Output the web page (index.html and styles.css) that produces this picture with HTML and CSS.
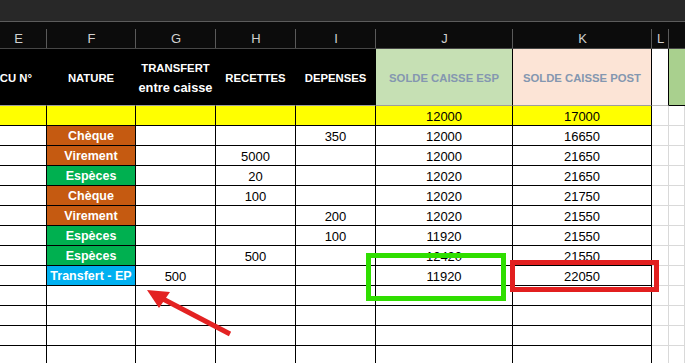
FILE: index.html
```html
<!DOCTYPE html>
<html lang="fr">
<head>
<meta charset="utf-8">
<title>Caisse</title>
<link rel="stylesheet" href="styles.css">
</head>
<body>
<div class="topbar"></div>
<div class="sheet">
  <div class="colhdr col-e">E</div>
  <div class="colhdr">F</div>
  <div class="colhdr">G</div>
  <div class="colhdr">H</div>
  <div class="colhdr">I</div>
  <div class="colhdr">J</div>
  <div class="colhdr">K</div>
  <div class="colhdr">L</div>
  <div class="colhdr colhdr-last"></div>

  <div class="hdr hdr-e"><span>RECU N°</span></div>
  <div class="hdr">NATURE</div>
  <div class="hdr hdr-two"><span>TRANSFERT</span><span class="sub">entre caisse</span></div>
  <div class="hdr">RECETTES</div>
  <div class="hdr">DEPENSES</div>
  <div class="hdr hdr-esp">SOLDE CAISSE ESP</div>
  <div class="hdr hdr-post">SOLDE CAISSE POST</div>
  <div class="hdr hdr-l"></div>
  <div class="hdr hdr-m"></div>

  <div class="c yellow"></div><div class="c yellow"></div><div class="c yellow"></div><div class="c yellow"></div><div class="c yellow"></div><div class="c yellow">12000</div><div class="c yellow">17000</div><div class="g"></div><div class="g"></div>

  <div class="c"></div><div class="c nat cheque">Chèque</div><div class="c"></div><div class="c"></div><div class="c">350</div><div class="c">12000</div><div class="c">16650</div><div class="g"></div><div class="g"></div>
  <div class="c"></div><div class="c nat cheque">Virement</div><div class="c"></div><div class="c">5000</div><div class="c"></div><div class="c">12000</div><div class="c">21650</div><div class="g"></div><div class="g"></div>
  <div class="c"></div><div class="c nat esp">Espèces</div><div class="c"></div><div class="c">20</div><div class="c"></div><div class="c">12020</div><div class="c">21650</div><div class="g"></div><div class="g"></div>
  <div class="c"></div><div class="c nat cheque">Chèque</div><div class="c"></div><div class="c">100</div><div class="c"></div><div class="c">12020</div><div class="c">21750</div><div class="g"></div><div class="g"></div>
  <div class="c"></div><div class="c nat cheque">Virement</div><div class="c"></div><div class="c"></div><div class="c">200</div><div class="c">12020</div><div class="c">21550</div><div class="g"></div><div class="g"></div>
  <div class="c"></div><div class="c nat esp">Espèces</div><div class="c"></div><div class="c"></div><div class="c">100</div><div class="c">11920</div><div class="c">21550</div><div class="g"></div><div class="g"></div>
  <div class="c"></div><div class="c nat esp">Espèces</div><div class="c"></div><div class="c">500</div><div class="c"></div><div class="c">12420</div><div class="c">21550</div><div class="g"></div><div class="g"></div>
  <div class="c"></div><div class="c nat transf">Transfert - EP</div><div class="c">500</div><div class="c"></div><div class="c"></div><div class="c">11920</div><div class="c">22050</div><div class="g"></div><div class="g"></div>
  <div class="c"></div><div class="c"></div><div class="c"></div><div class="c"></div><div class="c"></div><div class="c"></div><div class="c"></div><div class="g"></div><div class="g"></div>
  <div class="c"></div><div class="c"></div><div class="c"></div><div class="c"></div><div class="c"></div><div class="c"></div><div class="c"></div><div class="g"></div><div class="g"></div>
  <div class="c"></div><div class="c"></div><div class="c"></div><div class="c"></div><div class="c"></div><div class="c"></div><div class="c"></div><div class="g"></div><div class="g"></div>
  <div class="c"></div><div class="c"></div><div class="c"></div><div class="c"></div><div class="c"></div><div class="c"></div><div class="c"></div><div class="g"></div><div class="g"></div>
</div>
<svg class="annot" width="685" height="363" viewBox="0 0 685 363" aria-hidden="true">
  <rect x="368.5" y="255.5" width="135" height="43" fill="none" stroke="#2fde00" stroke-width="5"/>
  <rect x="512.5" y="262.5" width="144" height="27" fill="none" stroke="#e21f1f" stroke-width="5"/>
  <line x1="163" y1="299" x2="230" y2="334" stroke="#e32222" stroke-width="5"/>
  <polygon points="147,290 170,292 159,308" fill="#e32222"/>
</svg>
</body>
</html>
```

FILE: styles.css
```css
* { box-sizing: border-box; }
html, body {
  margin: 0;
  padding: 0;
  width: 685px;
  height: 363px;
  overflow: hidden;
  background: #ffffff;
  font-family: "Liberation Sans", Arial, sans-serif;
}
.topbar {
  height: 22px;
  background: #282828;
  border-bottom: 1px solid #5c5c5c;
}
.sheet {
  display: grid;
  grid-template-columns: 47px 89px 80px 80px 80px 137px 139px 17px 1fr;
  grid-template-rows: 27px 57px;
  grid-auto-rows: 20px;
}
.colhdr {
  background: #0c0c0c linear-gradient(#5a5a5a, #5a5a5a) right bottom / 1px 19px no-repeat;
  border-bottom: 1px solid #474747;
  color: #d0d0d0;
  font-size: 13px;
  line-height: 18px;
  padding-top: 8px;
  text-align: center;
}
.colhdr.col-e { padding-right: 10px; }
.colhdr-last { background: #0c0c0c; }

.hdr {
  background: #000;
  color: #fff;
  font-weight: bold;
  font-size: 11.3px;
  line-height: 20px;
  border-right: 1px solid #000;
  border-bottom: 1px solid #9d9d9d;
  display: flex;
  align-items: center;
  justify-content: center;
  text-align: center;
  padding-top: 2px;
  white-space: nowrap;
}
.hdr-e {
  justify-content: flex-end;
  padding-right: 14px;
  overflow: hidden;
}
.hdr-two {
  flex-direction: column;
  line-height: 20px;
  padding-top: 1px;
}
.hdr-two .sub { font-size: 12.8px; }
.hdr-esp { background: #c6e0b4; color: #8497b0; }
.hdr-post { background: #fce4d6; color: #8497b0; }
.hdr-l { background: #fff; border-bottom-color: #bcbcbc; }
.hdr-m { background: #a9d08e; border-bottom: 1px solid #000; border-right: none; }

.c {
  background: #fff;
  border-right: 1px solid #000;
  border-bottom: 1px solid #000;
  color: #000;
  font-size: 13px;
  line-height: 17px;
  padding-top: 2px;
  display: flex;
  align-items: center;
  justify-content: center;
  white-space: nowrap;
}
.yellow { background: #ffff00; }
.nat {
  color: #fff;
  font-weight: bold;
  font-size: 12.5px;
}
.cheque { background: #c55a11; }
.esp { background: #00b050; }
.transf { background: #00b0f0; }
.g {
  background: #fff;
  border-right: 1px solid #d9d9d9;
  border-bottom: 1px solid #d9d9d9;
}
.annot {
  position: absolute;
  left: 0;
  top: 0;
  pointer-events: none;
}
```
